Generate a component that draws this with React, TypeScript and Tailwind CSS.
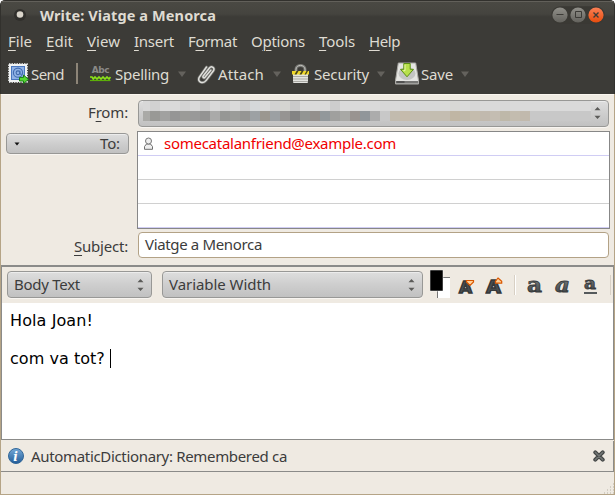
import { useLayoutEffect, useRef, type ReactNode } from "react";

/** Single line of text whose tracking is adjusted so that it fills `width`. */
function Label({ width, children, className = "" }: { width: number; children: ReactNode; className?: string }) {
  const ref = useRef<HTMLSpanElement>(null);
  useLayoutEffect(() => {
    const el = ref.current;
    if (!el) return;
    el.style.letterSpacing = "0px";
    const natural = el.getBoundingClientRect().width;
    const count = (el.textContent ?? "").length || 1;
    el.style.letterSpacing = `${(width - natural) / count}px`;
  }, [width]);
  return (
    <span className={`block shrink-0 whitespace-pre ${className}`} style={{ width }}>
      <span ref={ref} className="inline-block">{children}</span>
    </span>
  );
}

function Key({ children }: { children: string }) {
  return <span className="underline decoration-1 underline-offset-[3px]">{children}</span>;
}

function Drop({ className = "" }: { className?: string }) {
  return (
    <svg className={`shrink-0 ${className}`} width="8" height="6" viewBox="0 0 8 6">
      <path d="M0 .5h8L4 6z" fill="#64625d" />
    </svg>
  );
}

function Spinner({ className = "" }: { className?: string }) {
  return (
    <svg className={`shrink-0 ${className}`} width="7" height="12" viewBox="0 0 7 12">
      <path d="M.5 3.2 3.5 0l3 3.2zM.5 8.8l3 3.2 3-3.2z" fill="#5b5b59" />
    </svg>
  );
}

function StampIcon() {
  return (
    <svg className="shrink-0" width="21" height="21" viewBox="0 0 21 21">
      <rect x="1" y="1" width="18" height="18" fill="#f1f3f3" stroke="#f1f3f3" strokeWidth="1.6" strokeDasharray="1.5 1" />
      <rect x="3.5" y="3.5" width="13" height="13" fill="#8fb2e6" stroke="#4a78c0" />
      <circle cx="10" cy="9.7" r="4.6" fill="none" stroke="#416cae" strokeWidth="1.1" />
      <circle cx="10" cy="9.8" r="1.9" fill="none" stroke="#3f68a8" strokeWidth="1.1" />
      <path d="M12 7.7v3.2q1.2 1.5 2.4-.5" fill="none" stroke="#416cae" />
      <path d="M11.5 14.4h4v-2.3l5 4.2-5 4.2V18h-4z" fill="#56d632" stroke="#187d13" />
    </svg>
  );
}

function SpellIcon() {
  return (
    <span className="flex w-[21px] shrink-0 flex-col items-center">
      <span className="h-[11px] font-['DejaVu_Sans'] text-[9px] leading-[11px] font-bold tracking-[-0.4px] text-[#8a8a87]">Abc</span>
      <svg width="21" height="6" viewBox="0 0 21 6">
        <path d="M0 1h2l1.3 2L5 1l2 2 2-2 2 2 2-2 2 2 2-2 2 2 1.5-2" fill="none" stroke="#8ae218" strokeWidth="1.7" />
        <path d="M0 4.5h20.5" stroke="#5cae08" strokeWidth="1.2" />
      </svg>
    </span>
  );
}

function ClipIcon() {
  const d = "M13.8 6.2 8 13.3c-1 1.2-2.8.2-1.8-1.3l6.2-8c2-2.6 6-.1 4 2.8l-7.2 9.6c-3 4-9.3 1.8-7-3L9.5 3";
  return (
    <svg className="shrink-0" width="19" height="20" viewBox="0 0 19 20">
      <path d={d} fill="none" stroke="#686864" strokeWidth="3" strokeLinecap="round" />
      <path d={d} fill="none" stroke="#e0e0dc" strokeWidth="1.5" strokeLinecap="round" />
    </svg>
  );
}

function LockIcon() {
  return (
    <svg className="shrink-0" width="17" height="20" viewBox="0 0 17 20">
      <path d="M4 9V5.2C4 .2 13 .2 13 5.2V9" fill="none" stroke="#777773" strokeWidth="3" />
      <path d="M4 9V5.2C4 .2 13 .2 13 5.2V9" fill="none" stroke="#c3c3be" strokeWidth="1" />
      <rect x="1" y="7.5" width="15" height="11.5" rx="1" fill="#e3e3df" />
      <path d="M1 12.5h15M1 15h15M1 17.5h15" stroke="#aaa9a4" />
      <path d="M0 7h17v3.5H0z" fill="#f0d82b" />
      <path d="m2.5 10.5 2-3.5h2l-2 3.5zM7.5 10.5l2-3.5h2l-2 3.5zM12.5 10.5l2-3.5H16l-2 3.5z" fill="#49471c" />
    </svg>
  );
}

function DiskIcon() {
  return (
    <svg className="shrink-0" width="24" height="23" viewBox="0 0 24 23">
      <path d="M3.3 1h17.4L23.5 18.5V22H.5v-3.5z" fill="#e5e5e2" stroke="#aaa9a5" />
      <path d="M1 19h22v2.5H1z" fill="#777775" />
      <path d="M1.5 20h8" stroke="#2e2e2e" />
      <ellipse cx="12" cy="11.5" rx="8.5" ry="6.5" fill="#c4c5c3" />
      <path d="M8.8 1.5h6.4v5.8h3.3L12 14.8 5.5 7.3h3.3z" fill="#b8e04a" stroke="#5b8f13" />
      <path d="M10 2.7v6H8.3" stroke="#e8f8a9" fill="none" />
    </svg>
  );
}

function WindowButtons() {
  return (
    <svg className="mr-[9px] mb-[2px] ml-auto shrink-0" width="54" height="18" viewBox="0 0 54 18">
      <defs>
        <linearGradient id="btn" x2="0" y2="1"><stop stopColor="#91908a" /><stop offset="1" stopColor="#63625d" /></linearGradient>
        <linearGradient id="cls" x2="0" y2="1"><stop stopColor="#fa8056" /><stop offset="1" stopColor="#e74c0d" /></linearGradient>
      </defs>
      <rect x=".3" y=".3" width="53.4" height="17.4" rx="8.7" fill="#3a3934" />
      <circle cx="9" cy="9" r="7.6" fill="url(#btn)" />
      <circle cx="27" cy="9" r="7.6" fill="url(#btn)" />
      <circle cx="45" cy="9" r="7.6" fill="url(#cls)" />
      <path d="M5.5 8.5h7M24.5 5.5h6v6h-6z" fill="none" stroke="#3c3b37" />
      <path d="m42.5 6.5 5 5m0-5-5 5" stroke="#3c3b37" strokeWidth="1.4" />
    </svg>
  );
}

const upper = ["#d8d8d8", "#d1d1d1", "#dadada", "#dadada", "#d3d3d3", "#d9d9d9", "#d0d0d0", "#d9d9d9", "#d4d4d4", "#dadada", "#cecece", "#d5d8da", "#dadada", "#d1d1d1", "#d5d5d1", "#cacaca", "#dadada", "#dadada", "#dadada", "#cdcdcd", "#dadada", "#dadada", "#dadada", "#dadada", "#d7d7d7", "#d9d9d9", "#d8d8d8", "#d5d7d8", "#d8d8d8", "#d7d8d8", "#dadada", "#d8d8d5", "#dadada", "#d7d7d7", "#dadada", "#dadada", "#d8d8d8", "#dadada", "#dadada"];
const lower = ["#aaaaa7", "#999996", "#a1a1a0", "#959595", "#9b9b98", "#999", "#949493", "#aaaaa9", "#969795", "#9b9c99", "#969694", "#9da1a4", "#9b9790", "#9ca0a3", "#969492", "#848484", "#939593", "#94908d", "#92989b", "#a0a09e", "#a8a8a5", "#999491", "#91969a", "#acacac", "#c8c8c8", "#c2bbae", "#c5bbac", "#c3bcb0", "#c4beb3", "#c3bdb0", "#c4bdb1", "#c0b6a4", "#bfb8aa", "#c4bcad", "#c1b9ae", "#c4bdb2", "#beb8a9", "#c3bcaf", "#c1b9ad"];

function Mosaic() {
  const row = (cells: string[]) => (
    <div className="flex h-[10px]">
      {cells.map((c, i) => (
        <i key={i} className={`block ${i ? "w-[10px]" : "w-[7px]"}`} style={{ background: c }} />
      ))}
      <i className="block flex-1" style={{ background: cells === upper ? "#dadada" : "#c8c8c8" }} />
    </div>
  );
  return (
    <div className="ml-1 w-[448px] self-start">
      {row(upper)}
      {row(lower)}
    </div>
  );
}

const button = "rounded-[4px] border border-[#989896] bg-gradient-to-b from-[#dedede] via-[#cecece] to-[#c1c1c1] shadow-[inset_0_1px_0_#ececec,0_1px_0_#f8f5f1]";

function Glyph({ kind }: { kind: "smaller" | "larger" | "bold" | "italic" | "underline" }) {
  const sized = kind === "smaller" || kind === "larger";
  const style = kind === "italic" ? "italic" : "normal";
  return (
    <svg className="shrink-0" width="18" height="28" viewBox="0 -5 18 28">
      <defs>
        <linearGradient id="ink" x2="0" y2="1"><stop stopColor="#8b8f90" /><stop offset="1" stopColor="#33383a" /></linearGradient>
      </defs>
      {sized ? (
        <>
          <text x={kind === "larger" ? 1 : 2} y="17" textLength={kind === "larger" ? 15 : 13} lengthAdjust="spacingAndGlyphs" fontFamily="DejaVu Sans" fontWeight="bold" fontSize={kind === "larger" ? 17 : 15} fill="#4b5052" stroke="#35393b" strokeWidth="1.4">A</text>
          {kind === "smaller"
            ? <path d="M9.5 4.5h7v1.5L13 9.5 9.5 6z" fill="#ffd199" stroke="#d95700" strokeWidth="1.2" />
            : <path d="m13 2 3.7 3.2v2h-6.2v-2z" fill="#ffd199" stroke="#d95700" strokeWidth="1.2" />}
        </>
      ) : (
        <>
          <text x="1" y={kind === "underline" ? 13 : 16} textLength={kind === "underline" ? 12 : 15} dx={kind === "underline" ? 1 : 0} lengthAdjust="spacingAndGlyphs" fontFamily="DejaVu Serif" fontWeight="bold" fontStyle={style} fontSize={kind === "underline" ? 17 : 20} fill="url(#ink)" stroke="#35393b" strokeWidth=".8">a</text>
          {kind === "underline" && <path d="M2 17h13" stroke="#555a5c" strokeWidth="2" />}
        </>
      )}
    </svg>
  );
}

export default function App() {
  return (
    <div className="flex h-[495px] w-[615px] flex-col overflow-hidden bg-white font-['Noto_Sans',sans-serif] text-[15px] leading-5 text-[#3c3c3c]">
      <header className="h-[94px] shrink-0 rounded-t-[5px] border-x border-t border-[#32312d] bg-[#3c3b37] text-[#dfdbd2]">
        <div className="flex h-[28px] items-center border-t border-[#62605a] bg-gradient-to-b from-[#4a4943] from-[0%] via-[#45443f] via-[44%] to-[#3c3b37] to-[55%]">
          <svg className="mb-[2px] ml-[12px] shrink-0" width="14" height="14" viewBox="0 0 14 14">
            <circle cx="7" cy="7" r="6" fill="#302f2c" />
            <circle cx="7" cy="6.5" r="3.3" fill="#dad5cb" />
          </svg>
          <Label width={176} className="mb-[2px] ml-[13px] font-['Noto_Sans',sans-serif] text-[14.5px] font-bold">Write: Viatge a Menorca</Label>
          <WindowButtons />
        </div>
        <nav className="flex h-[26px] items-center gap-[14px] pb-[2px] pl-[7px]">
          <Label width={24}><Key>F</Key>ile</Label>
          <Label width={27}><Key>E</Key>dit</Label>
          <Label width={33}><Key>V</Key>iew</Label>
          <Label width={40}><Key>I</Key>nsert</Label>
          <Label width={49}>F<Key>o</Key>rmat</Label>
          <Label width={54}>O<Key>p</Key>tions</Label>
          <Label width={36}><Key>T</Key>ools</Label>
          <Label width={31}><Key>H</Key>elp</Label>
        </nav>
        <div className="flex h-[37px] items-center pl-[7px]">
          <StampIcon />
          <Label width={33} className="ml-[2px]">Send</Label>
          <i className="ml-[12px] block h-[21px] w-[2px] bg-[#8d8578]" />
          <span className="ml-[12px]"><SpellIcon /></span>
          <Label width={54} className="ml-[4px]">Spelling</Label>
          <Drop className="ml-[9px]" />
          <span className="ml-[11px]"><ClipIcon /></span>
          <Label width={46} className="ml-[2px]">Attach</Label>
          <Drop className="ml-[9px]" />
          <span className="ml-[11px]"><LockIcon /></span>
          <Label width={55} className="ml-[5px]">Security</Label>
          <Drop className="ml-[8px]" />
          <span className="ml-[10px]"><DiskIcon /></span>
          <Label width={32} className="ml-[2px]">Save</Label>
          <Drop className="ml-[8px]" />
        </div>
      </header>

      <main className="flex flex-1 flex-col border-x border-b border-[#b5a486] bg-[#efeae2]">
        <section className="flex h-[171px] shrink-0 flex-col border-t border-[#faf6ef]">
          <div className="flex h-[36px] items-center pl-[87px]">
            <Label width={40} className="mb-[2px]">F<Key>r</Key>om:</Label>
            <div className={`ml-[10px] flex h-[27px] w-[471px] items-center ${button}`}>
              <Mosaic />
              <Spinner className="mr-[7px] ml-auto" />
            </div>
          </div>
          <div className="flex h-[98px]">
            <button className={`mt-[2px] ml-[5px] flex h-[21px] w-[123px] items-center ${button}`}>
              <svg className="ml-[7px]" width="6" height="4" viewBox="0 0 6 4"><path d="M.5.5h5L3 3.5z" fill="#111" /></svg>
              <Label width={20} className="mr-[8px] mb-[1px] ml-auto">To:</Label>
            </button>
            <div className="ml-[8px] h-[98px] w-[473px] border border-[#878787] bg-white">
              <div className="flex h-[24px] items-center border-b border-[#d0cdf4]">
                <svg className="ml-[5px]" width="11" height="13" viewBox="0 0 11 13">
                  <path d="M1.5 12.3V9.5L3.5 7h4l2 2.5v2.8z" fill="#eee" stroke="#6f6f6f" />
                  <circle cx="5.5" cy="4" r="3" fill="#eee" stroke="#777" />
                </svg>
                <Label width={232} className="mb-[2px] ml-[10px] text-[#f00000]">somecatalanfriend@example.com</Label>
              </div>
              <div className="h-[24px] border-b border-[#d0d0d0]" />
              <div className="h-[24px] border-b border-[#d0d0d0]" />
              <div className="h-[24px] border-b border-[#d0cdf4]" />
            </div>
          </div>
          <div className="flex h-[36px] pt-[3px] pl-[73px]">
            <Label width={54} className="mt-[4px]"><Key>S</Key>ubject:</Label>
            <div className="ml-[10px] h-[26px] w-[471px] rounded-[4px] border border-[#b3a286] bg-white pt-[1px] pl-[6px]">
              <Label width={117}>Viatge a Menorca</Label>
            </div>
          </div>
        </section>

        <section className="h-[175px] shrink-0 border-x border-t-2 border-b border-[#8b8b89] bg-white">
          <div className="flex h-[36px] items-center bg-[#efeae2] pl-[5px]">
            <div className={`mb-px flex h-[27px] w-[145px] shrink-0 items-center pl-[6px] ${button}`}>
              <Label width={66} className="mb-px">Body Text</Label>
              <Spinner className="mr-[7px] ml-auto" />
            </div>
            <div className={`mb-px ml-[10px] flex h-[27px] w-[261px] shrink-0 items-center pl-[6px] ${button}`}>
              <Label width={102} className="mb-px">Variable Width</Label>
              <Spinner className="mr-[7px] ml-auto" />
            </div>
            <svg className="mb-[2px] ml-[7px] shrink-0" width="21" height="28" viewBox="0 0 21 28">
              <path d="M7 7h13v21H7z" fill="#fff" />
              <path d="M7.5 28V7.5H20" fill="none" stroke="#777" />
              <path d="M0 0h13v21H0z" fill="#000" stroke="#fff" strokeWidth=".5" />
            </svg>
            <span className="ml-[6px]"><Glyph kind="smaller" /></span>
            <span className="ml-[10px]"><Glyph kind="larger" /></span>
            <i className="ml-[11px] block h-[20px] w-[2px] border-l border-[#d8d0c4] bg-white" />
            <span className="ml-[10px]"><Glyph kind="bold" /></span>
            <span className="ml-[10px]"><Glyph kind="italic" /></span>
            <span className="ml-[10px]"><Glyph kind="underline" /></span>
            <i className="ml-[10px] block h-[20px] w-px bg-[#d8d0c4]" />
          </div>
          <div className="pt-[8px] pl-[8px] font-['DejaVu_Sans'] text-[16px] leading-[19px] text-black">
            <p><Label width={83}>Hola Joan!</Label></p>
            <p>&nbsp;</p>
            <p className="flex"><Label width={100}>com va tot? </Label><i className="block h-[19px] w-px bg-black" /></p>
          </div>
        </section>

        <section className="mt-px flex h-[31px] shrink-0 items-center border-r border-b border-[#8b8b89] pl-[7px]">
          <svg className="shrink-0" width="17" height="17" viewBox="0 0 17 17">
            <defs><linearGradient id="info" x2="0" y2="1"><stop stopColor="#75a9d8" /><stop offset="1" stopColor="#225c98" /></linearGradient></defs>
            <circle cx="8" cy="8" r="7.5" fill="url(#info)" stroke="#326799" />
            <text x="5.3" y="12.5" fill="#fff" fontFamily="DejaVu Serif" fontStyle="italic" fontWeight="bold" fontSize="12">i</text>
          </svg>
          <Label width={256} className="ml-[6px]">AutomaticDictionary: Remembered ca</Label>
          <svg className="mr-[8px] ml-auto" width="12" height="12" viewBox="0 0 12 12">
            <path d="m2.3 2.3 7.4 7.4m0-7.4L2.3 9.7" stroke="#444746" strokeWidth="4" strokeLinecap="round" />
            <path d="m2.3 2.3 7.4 7.4m0-7.4L2.3 9.7" stroke="#737776" strokeWidth="1.6" strokeLinecap="round" />
          </svg>
        </section>
        <footer className="flex flex-1 items-end justify-end">
          <svg width="11" height="11" viewBox="0 0 11 11">
            <path d="M1 10h1m2 0h1m2 0h1m2 0h1M4 7h1m2 0h1m2 0h1M7 4h1m2 0h1M10 1h1" stroke="#c9c3b8" strokeWidth="1.5" />
          </svg>
        </footer>
      </main>
    </div>
  );
}
